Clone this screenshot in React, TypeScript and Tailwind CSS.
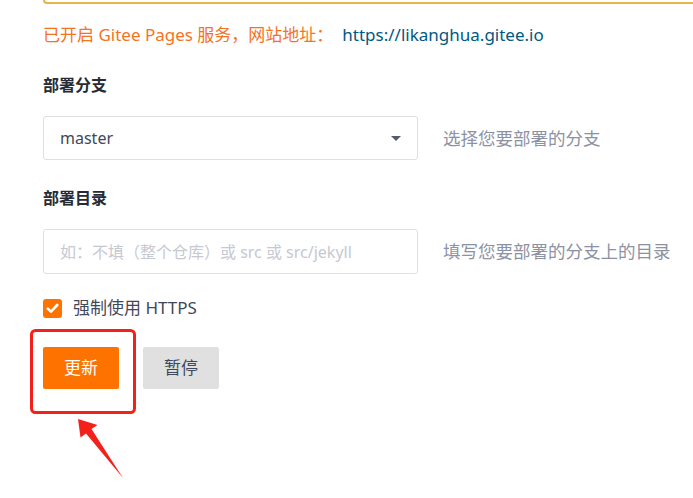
import React from "react";

export default function App() {
  const font = { fontFamily: '"Microsoft YaHei", "Noto Sans", "Noto Sans CJK SC", sans-serif' };
  return (
    <div className="relative w-[693px] h-[498px] bg-white overflow-hidden" style={font}>
      <div className="ml-[43px] h-[4px] border-l-2 border-b-2 border-[#e7b548] rounded-bl-[4px]" />
      <div className="pl-[43px]">
        <div className="mt-[19px] h-[24px] flex items-center text-[17px] leading-[24px]">
          <span className="text-[#f5731f]">已开启 Gitee Pages 服务，网站地址：</span>
          <span className="ml-[9px] text-[#005980]">https://likanghua.gitee.io</span>
        </div>

        <div className="mt-[26px] h-[24px] text-[16px] leading-[24px] font-bold text-[#262b36]">部署分支</div>
        <div className="mt-[19px] flex items-center">
          <div className="w-[375px] h-[44px] border border-[#dcdfe6] rounded-[3px] flex items-center justify-between pl-[16px] pr-[16px]">
            <span className="text-[16px] text-[#40485b]">master</span>
            <span className="w-0 h-0 border-l-[5px] border-r-[5px] border-t-[5px] border-l-transparent border-r-transparent border-t-[#555b6a]" />
          </div>
          <span className="ml-[25px] text-[17.5px] text-[#8c92a4]">选择您要部署的分支</span>
        </div>

        <div className="mt-[26px] h-[24px] text-[16px] leading-[24px] font-bold text-[#262b36]">部署目录</div>
        <div className="mt-[19px] flex items-center">
          <div className="w-[375px] h-[45px] border border-[#dcdfe6] rounded-[3px] flex items-center pl-[16px]">
            <span className="text-[16px] text-[#c6c9d1]">如：不填（整个仓库）或 src 或 src/jekyll</span>
          </div>
          <span className="ml-[25px] text-[17.5px] text-[#8c92a4]">填写您要部署的分支上的目录</span>
        </div>

        <div className="mt-[24px] h-[20px] flex items-center">
          <div className="w-[19px] h-[19px] rounded-[3px] bg-[#fe7300] flex items-center justify-center">
            <svg width="13" height="11" viewBox="0 0 13 11">
              <path d="M1.8 5.6 L5 8.6 L11.2 2" stroke="white" strokeWidth="2.6" fill="none" strokeLinecap="round" strokeLinejoin="round" />
            </svg>
          </div>
          <span className="ml-[11px] text-[17px] text-[#40485b]">强制使用 HTTPS</span>
        </div>

        <div className="mt-[29px] flex gap-[24px]">
          <div className="w-[76px] h-[42px] rounded-[2px] bg-[#fe7300] text-white text-[17px] flex items-center justify-center">更新</div>
          <div className="w-[76px] h-[42px] rounded-[2px] bg-[#e0e0e0] text-[#40485b] text-[17px] flex items-center justify-center">暂停</div>
        </div>
      </div>

      <svg className="absolute left-0 top-0 pointer-events-none" width="693" height="498">
        <rect x="31.5" y="330.5" width="103" height="82" rx="4" fill="none" stroke="#f4211b" strokeWidth="3" />
        <polygon points="78,419 97.5,425 91.5,429 123,478 86,433.5 80.5,437.5" fill="#f4211b" />
      </svg>
    </div>
  );
}
